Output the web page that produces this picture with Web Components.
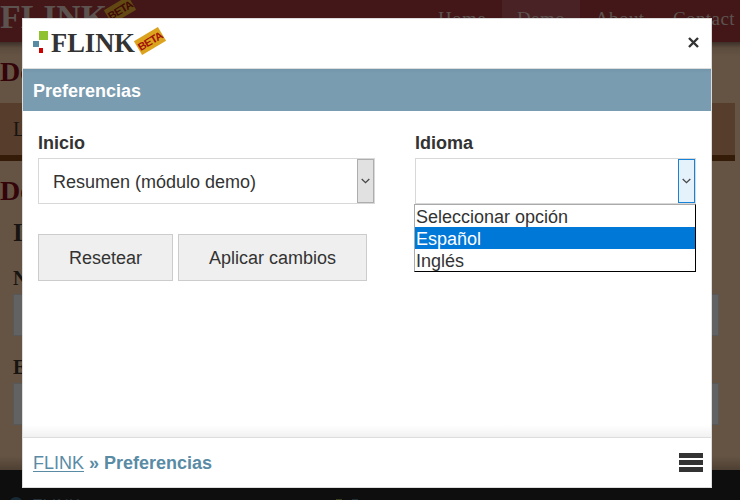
<!DOCTYPE html>
<html lang="es">
<head>
<meta charset="utf-8">
<title>FLINK » Preferencias</title>
<style>
html,body{margin:0;height:100%;overflow:hidden}
body{font:18px "Liberation Sans",Arial,sans-serif;color:#333;background:#655444}
</style>
</head>
<body>
<flink-app></flink-app>
<script>
function define(name, html) {
  const t = document.createElement('template');
  t.innerHTML = html;
  customElements.define(name, class extends HTMLElement {
    constructor() {
      super();
      this.attachShadow({mode: 'open'}).append(t.content.cloneNode(true));
    }
  });
}

define('flink-brand', `
<style>
:host{display:flex;position:relative;width:136px;height:30px;font:bold 26.5px/30px "Liberation Serif",serif;color:inherit}
svg{width:18px;height:30px;flex:none}
:host([large]){font-size:33.8px;line-height:32px}
:host([large]) svg{display:none}
.beta{position:absolute;left:103px;top:5px;width:28px;height:16px;background:var(--beta-bg,#dca31e);color:var(--beta-fg,#a11208);font:bold 11px/16px "Liberation Sans",sans-serif;letter-spacing:-.7px;text-align:center;transform:rotate(-31deg)}
:host([large]) .beta{left:106px;top:1px}
</style>
<svg viewBox="0 0 18 30"><path fill="#8fc131" d="M6 3h9v9H6z"/><path fill="#5a8ba5" d="M0 13h6v6H0z"/><path fill="#cc0000" d="M6 20h4v5H6z"/></svg>
<span><slot></slot></span><span class="beta">BETA</span>`);

define('site-nav', `
<style>
:host{display:grid;grid-template-columns:79px 78px 78px 82px;height:42px;font:19px/37px "Liberation Serif",serif;color:#5c5350;letter-spacing:.4px;white-space:nowrap}
::slotted(*){padding-left:15px}
::slotted(.on){background:#482224}
</style><slot></slot>`);

define('site-field', `
<style>
:host{display:block;margin:0 21px 0 13px}
.label{height:32px;font:bold 20px/32px "Liberation Serif",serif;color:#171411}
.box{height:40px;background:#626262;border:1px solid #56585a}
</style><div class="label"><slot></slot></div><div class="box"></div>`);

define('site-page', `
<style>
:host{display:flex;flex-direction:column;height:500px;background:linear-gradient(#3d3028 42px,#5c4c3e 48px,#655444 56px,#655444 456px,#4d3f33 470px);overflow:hidden;font-family:"Liberation Serif",serif;color:#171411}
header{height:42px;display:flex;background:#431717;flex:none}
flink-brand{--beta-bg:#624913;--beta-fg:#400805;color:#5c5350;margin:1px 287px 0 0;flex:none}
h2{margin:0;padding-top:10px;font-size:28px;line-height:40px;height:50px;box-sizing:border-box;color:#33040a;flex:none}
.first{height:61px;padding-top:10px}
.bar{width:735px;height:58px;box-sizing:border-box;background:#573d2b;border-bottom:6px solid #341c09;padding-left:13px;font-size:20px;line-height:52px;flex:none}
h3{margin:0 0 0 13px;font-size:25px;line-height:44px;height:40px;flex:none}
site-field{flex:none}
footer{margin-top:auto;height:30px;background:#0e0e0e;display:flex;color:#23323b;font:17px/20px "Liberation Sans",sans-serif;flex:none}
footer i{width:14px;height:14px;border-radius:50%;background:#172a35;margin:27px 9px 0 9px;flex:none}
footer span{padding-top:26px;width:304px;flex:none}
footer b{width:6px;height:6px;background:#39421a;margin:29px 10px 0 0}
footer b+b{background:#202e35}
</style>
<header><flink-brand large>FLINK</flink-brand><site-nav><span>Home</span><span class="on">Demo</span><span>About</span><span>Contact</span></site-nav></header>
<h2 class="first">De</h2><div class="bar">L</div><h2>De</h2>
<h3>I</h3>
<site-field style="margin-top:11px">N</site-field>
<site-field style="margin-top:15px">E</site-field>
<footer><i></i><span>FLINK</span><b></b><b></b></footer>`);

define('flink-select', `
<style>
:host{display:block;position:relative;width:var(--w)}
.label{font-weight:bold;line-height:23px;height:26px;white-space:nowrap}
.box{display:flex;height:46px;box-sizing:border-box;border:1px solid #d8d8d8;background:#fff}
.value{flex:1;padding-left:14px;line-height:46px}
.arrow{width:17px;box-sizing:border-box;border:1px solid #adadad;background:#e1e1e1;display:grid;place-items:center}
:host([open]) .arrow{border-color:#1683d9;background:#e5f1fb}
svg{width:9px;height:6px}
</style>
<div class="label"><slot name="label"></slot></div>
<div class="box"><div class="value"><slot></slot></div><div class="arrow"><svg viewBox="0 0 9 6"><path d="M.7 1 4.5 4.7 8.3 1" fill="none" stroke="#484848" stroke-width="1.3"/></svg></div></div>
<slot name="menu"></slot>`);

define('flink-options', `
<style>
:host{position:absolute;left:-1px;top:72px;width:282px;height:68px;box-sizing:border-box;border:1px solid #000;border-top-color:#aaa;border-left-color:#aaa;background:#fff;z-index:2}
::slotted(*){display:block;height:22px;line-height:24px;padding-left:1px}
::slotted(.on){background:#0078d7;color:#fff}
</style><slot></slot>`);

define('flink-button', `
<style>
:host{display:block;box-sizing:border-box;height:47px;padding:0 30px;line-height:46px;border:1px solid #ccc;background:#efefef;white-space:nowrap}
</style><slot></slot>`);

define('flink-dialog', `
<style>
:host{position:absolute;left:22px;top:18px;width:690px;height:470px;box-sizing:border-box;border:1px solid #ddd;background:#fff;display:flex;flex-direction:column}
header{height:50px;box-sizing:border-box;border-bottom:1px solid #ddd;padding:9px 12px 0 10px;display:flex;justify-content:space-between}
.close{width:11px;height:11px;margin-top:9px}
h1{margin:0;height:42px;padding-left:10px;background:linear-gradient(#7395a9,#7a9cb0 4px);color:#fff;font-size:18px;line-height:44px}
main{flex:1;background:linear-gradient(#fff calc(100% - 12px),#f1f1f1)}
footer{height:50px;box-sizing:border-box;border-top:1px solid #ddd;padding:0 8px 0 10px;display:flex;align-items:center;justify-content:space-between;background:#fff}
.menu{width:24px;height:19px}
</style>
<header><flink-brand>FLINK</flink-brand><svg class="close" viewBox="0 0 11 11"><path d="M1 1 10 10M10 1 1 10" stroke="#333" stroke-width="2.4"/></svg></header>
<h1><slot name="title"></slot></h1>
<main><slot></slot></main>
<footer><slot name="path"></slot><svg class="menu" viewBox="0 0 24 19"><path fill="#333" d="M0 0h24v5H0zM0 7h24v5H0zM0 14h24v5H0z"/></svg></footer>`);

define('flink-app', `
<style>
:host{display:block;position:relative;width:740px;height:500px;overflow:hidden}
.fields{display:grid;grid-template-columns:337px 281px;gap:40px;padding:21px 0 0 15px}
.buttons{display:flex;gap:5px;padding:30px 0 0 15px}
.path{color:#5a8ba5;font-weight:bold;white-space:nowrap;padding-top:2px}
.path a{font-weight:normal;text-decoration:underline;text-underline-offset:2px;text-decoration-thickness:1px}
</style>
<site-page></site-page>
<flink-dialog>
<span slot="title">Preferencias</span>
<div class="fields">
<flink-select><span slot="label">Inicio</span>Resumen (módulo demo)</flink-select>
<flink-select open><span slot="label">Idioma</span><flink-options slot="menu"><span>Seleccionar opción</span><span class="on">Español</span><span>Inglés</span></flink-options></flink-select>
</div>
<div class="buttons"><flink-button>Resetear</flink-button><flink-button>Aplicar cambios</flink-button></div>
<div slot="path" class="path"><a>FLINK</a> » Preferencias</div>
</flink-dialog>`);
</script>
</body>
</html>
